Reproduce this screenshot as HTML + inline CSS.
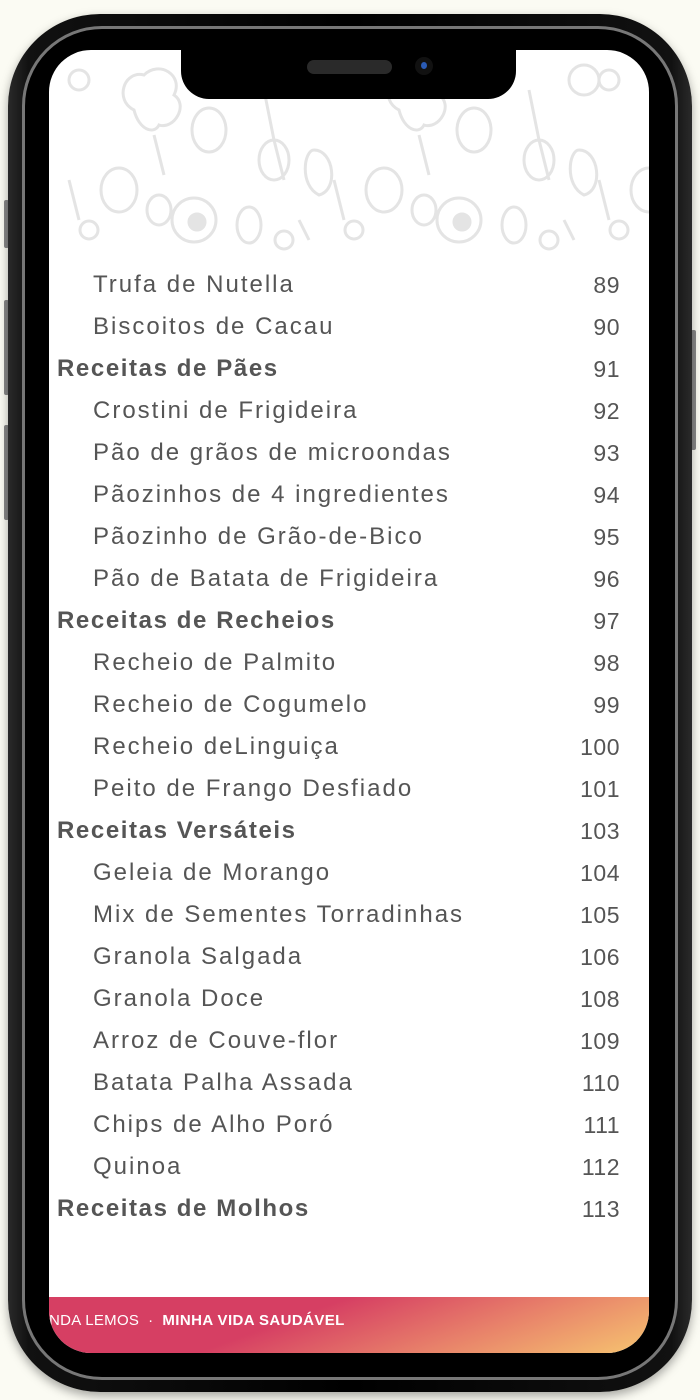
<!DOCTYPE html>
<html><head><meta charset="utf-8"><style>
*{margin:0;padding:0;box-sizing:border-box}
body{width:700px;height:1400px;background:#fbfbf3;position:relative;overflow:hidden;font-family:"Liberation Sans",sans-serif}
.phone{position:absolute;left:8px;top:14px;width:684px;height:1378px;border-radius:92px;background:linear-gradient(90deg,#2a2a2a,#111 3%,#000 50%,#111 97%,#2a2a2a);box-shadow:0 4px 10px rgba(0,0,0,.35)}
.rim{position:absolute;left:14px;top:12px;right:14px;bottom:12px;border-radius:80px;border:3px solid #777;background:#000}
.screen{position:absolute;left:49px;top:50px;width:600px;height:1303px;border-radius:42px;background:#fff;overflow:hidden}
.notch{position:absolute;left:181px;top:50px;width:335px;height:49px;background:#000;border-radius:0 0 28px 28px}
.spk{position:absolute;left:307px;top:60px;width:85px;height:14px;border-radius:7px;background:#2a2a2a}
.cam{position:absolute;left:415px;top:57px;width:18px;height:18px;border-radius:50%;background:#111}
.cam:after{content:"";position:absolute;left:6px;top:5px;width:6px;height:7px;border-radius:50%;background:#2a5bb5}
.row{position:absolute;left:0;width:600px;height:30px;font-size:24px;color:#555;line-height:30px}
.row span.t{position:absolute;letter-spacing:2px;white-space:nowrap}
.row span.n{position:absolute;right:29px;letter-spacing:0.5px;font-weight:normal;font-size:23px}
.sec span.t{font-weight:bold;letter-spacing:1.6px}
.footer{position:absolute;left:0;top:1247px;width:600px;height:56px;background:linear-gradient(160deg,#d63f63 0%,#d63f63 40%,#e8826a 70%,#f6c470 100%)}
.footer div{position:absolute;left:0;top:15px;font-size:15px;color:#fff;white-space:nowrap}
.btn{position:absolute;background:#888;width:5px;border-radius:2px}
</style></head><body>
<div class="btn" style="left:4px;top:200px;height:48px"></div>
<div class="btn" style="left:4px;top:300px;height:95px"></div>
<div class="btn" style="left:4px;top:425px;height:95px"></div>
<div class="btn" style="left:691px;top:330px;height:120px"></div>
<div class="phone"><div class="rim"></div></div>
<div class="screen">
<svg width="600" height="210" style="position:absolute;left:0;top:0" fill="none" stroke="#e4e4e4" stroke-width="3">
<g id="p">
<circle cx="30" cy="30" r="10"/><path d="M85 60c-20-10-10-40 10-35 15-15 40 0 30 20 15 10 0 35-15 30-5 10-20 5-25-15z"/><path d="M105 85l10 40"/>
<ellipse cx="160" cy="80" rx="17" ry="22"/><path d="M215 40l10 50 10 40"/><ellipse cx="225" cy="110" rx="15" ry="20"/>
<path d="M265 100c-10 0-15 35 5 45 20-5 15-45-5-45z"/><ellipse cx="145" cy="170" rx="22" ry="22"/><circle cx="148" cy="172" r="8" fill="#e4e4e4"/>
<ellipse cx="200" cy="175" rx="12" ry="18"/><circle cx="235" cy="190" r="9"/><circle cx="40" cy="180" r="9"/><ellipse cx="70" cy="140" rx="18" ry="22"/>
<ellipse cx="110" cy="160" rx="12" ry="15"/><circle cx="270" cy="30" r="15"/><path d="M250 170l10 20M20 130l10 40"/>
</g>
<use href="#p" x="265"/><use href="#p" x="530"/>
</svg>
<div class="footer"><div><span style="letter-spacing:0.3px">NDA LEMOS &nbsp;·&nbsp; </span><b style="letter-spacing:0.4px">MINHA VIDA SAUDÁVEL</b></div></div>
</div>
<div class="notch"></div><div class="spk"></div><div class="cam"></div>
<div style="position:absolute;left:49px;top:0;width:600px">
<div class="row" style="top:270px"><span class="t" style="left:44px">Trufa de Nutella</span><span class="n">89</span></div>
<div class="row" style="top:312px"><span class="t" style="left:44px">Biscoitos de Cacau</span><span class="n">90</span></div>
<div class="row sec" style="top:354px"><span class="t" style="left:8px">Receitas de Pães</span><span class="n">91</span></div>
<div class="row" style="top:396px"><span class="t" style="left:44px">Crostini de Frigideira</span><span class="n">92</span></div>
<div class="row" style="top:438px"><span class="t" style="left:44px">Pão de grãos de microondas</span><span class="n">93</span></div>
<div class="row" style="top:480px"><span class="t" style="left:44px">Pãozinhos de 4 ingredientes</span><span class="n">94</span></div>
<div class="row" style="top:522px"><span class="t" style="left:44px">Pãozinho de Grão-de-Bico</span><span class="n">95</span></div>
<div class="row" style="top:564px"><span class="t" style="left:44px">Pão de Batata de Frigideira</span><span class="n">96</span></div>
<div class="row sec" style="top:606px"><span class="t" style="left:8px">Receitas de Recheios</span><span class="n">97</span></div>
<div class="row" style="top:648px"><span class="t" style="left:44px">Recheio de Palmito</span><span class="n">98</span></div>
<div class="row" style="top:690px"><span class="t" style="left:44px">Recheio de Cogumelo</span><span class="n">99</span></div>
<div class="row" style="top:732px"><span class="t" style="left:44px">Recheio deLinguiça</span><span class="n">100</span></div>
<div class="row" style="top:774px"><span class="t" style="left:44px">Peito de Frango Desfiado</span><span class="n">101</span></div>
<div class="row sec" style="top:816px"><span class="t" style="left:8px">Receitas Versáteis</span><span class="n">103</span></div>
<div class="row" style="top:858px"><span class="t" style="left:44px">Geleia de Morango</span><span class="n">104</span></div>
<div class="row" style="top:900px"><span class="t" style="left:44px">Mix de Sementes Torradinhas</span><span class="n">105</span></div>
<div class="row" style="top:942px"><span class="t" style="left:44px">Granola Salgada</span><span class="n">106</span></div>
<div class="row" style="top:984px"><span class="t" style="left:44px">Granola Doce</span><span class="n">108</span></div>
<div class="row" style="top:1026px"><span class="t" style="left:44px">Arroz de Couve-flor</span><span class="n">109</span></div>
<div class="row" style="top:1068px"><span class="t" style="left:44px">Batata Palha Assada</span><span class="n">110</span></div>
<div class="row" style="top:1110px"><span class="t" style="left:44px">Chips de Alho Poró</span><span class="n">111</span></div>
<div class="row" style="top:1152px"><span class="t" style="left:44px">Quinoa</span><span class="n">112</span></div>
<div class="row sec" style="top:1194px"><span class="t" style="left:8px">Receitas de Molhos</span><span class="n">113</span></div>
</div>
</body></html>
